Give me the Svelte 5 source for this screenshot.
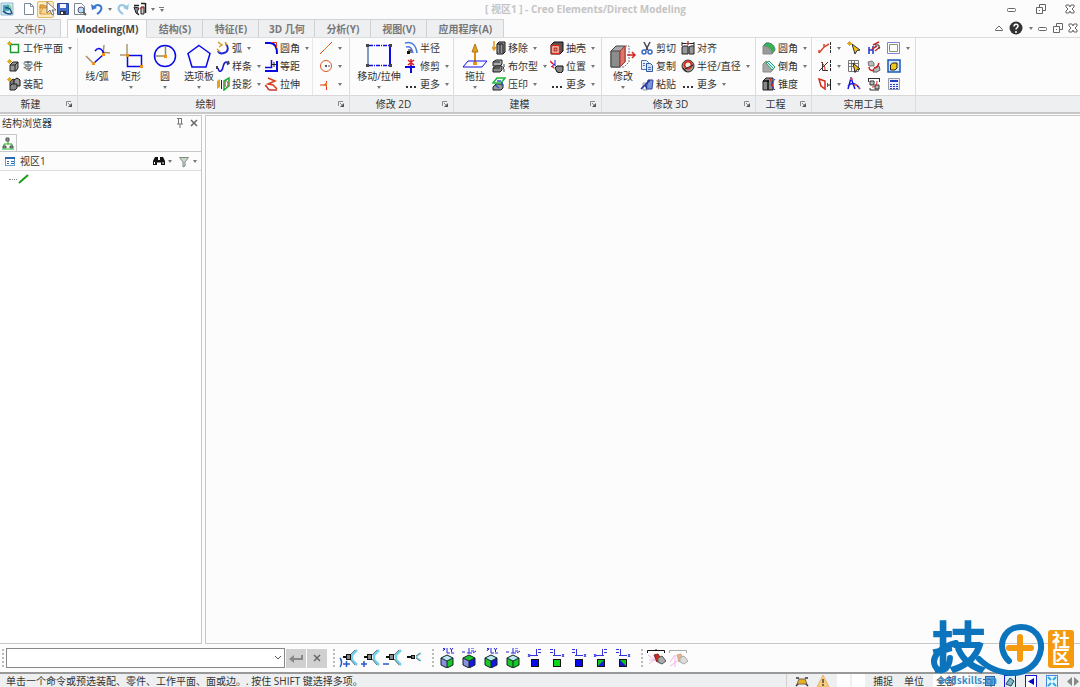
<script lang="ts">
	type Item = { icon: string; label?: string; menu?: boolean; title?: string };
	type Group = { id: string; name: string; launcher?: boolean; big: Item[]; cols: Item[][] };

	const tabs = [
		{ text: '结构', key: 'S' },
		{ text: '特征', key: 'E' },
		{ text: '3D 几何', key: '' },
		{ text: '分析', key: 'Y' },
		{ text: '视图', key: 'V' },
		{ text: '应用程序', key: 'A' }
	];

	const groups: Group[] = [
		{
			id: 'create',
			name: '新建',
			launcher: true,
			big: [],
			cols: [
				[
					{ icon: 'workplane', label: '工作平面', menu: true },
					{ icon: 'part', label: '零件' },
					{ icon: 'assembly', label: '装配' }
				]
			]
		},
		{
			id: 'draw',
			name: '绘制',
			launcher: true,
			big: [
				{ icon: 'lineArc', label: '线/弧' },
				{ icon: 'rect', label: '矩形', menu: true },
				{ icon: 'circle', label: '圆', menu: true },
				{ icon: 'polygon', label: '选项板', menu: true }
			],
			cols: [
				[
					{ icon: 'arc', label: '弧', menu: true },
					{ icon: 'spline', label: '样条', menu: true },
					{ icon: 'project', label: '投影', menu: true }
				],
				[
					{ icon: 'fillet', label: '圆角', menu: true },
					{ icon: 'offset', label: '等距' },
					{ icon: 'stretch', label: '拉伸' }
				],
				[
					{ icon: 'geoLine', title: '构造线', menu: true },
					{ icon: 'geoCircle', title: '构造圆', menu: true },
					{ icon: 'geoPoint', title: '点', menu: true }
				]
			]
		},
		{
			id: 'edit2d',
			name: '修改 2D',
			launcher: true,
			big: [{ icon: 'move', label: '移动/拉伸', menu: true }],
			cols: [
				[
					{ icon: 'radius', label: '半径' },
					{ icon: 'trim', label: '修剪', menu: true },
					{ icon: 'more', label: '更多', menu: true }
				]
			]
		},
		{
			id: 'model',
			name: '建模',
			launcher: true,
			big: [{ icon: 'pull', label: '拖拉', menu: true }],
			cols: [
				[
					{ icon: 'remove', label: '移除', menu: true },
					{ icon: 'bool', label: '布尔型', menu: true },
					{ icon: 'imprint', label: '压印', menu: true }
				],
				[
					{ icon: 'shell', label: '抽壳', menu: true },
					{ icon: 'position', label: '位置', menu: true },
					{ icon: 'more', label: '更多', menu: true }
				]
			]
		},
		{
			id: 'edit3d',
			name: '修改 3D',
			launcher: true,
			big: [{ icon: 'modify', label: '修改', menu: true }],
			cols: [
				[
					{ icon: 'cut', label: '剪切' },
					{ icon: 'copy', label: '复制' },
					{ icon: 'paste', label: '粘贴' }
				],
				[
					{ icon: 'align', label: '对齐' },
					{ icon: 'radius3d', label: '半径/直径', menu: true },
					{ icon: 'more', label: '更多', menu: true }
				]
			]
		},
		{
			id: 'eng',
			name: '工程',
			launcher: true,
			big: [],
			cols: [
				[
					{ icon: 'blend', label: '圆角', menu: true },
					{ icon: 'chamfer', label: '倒角', menu: true },
					{ icon: 'taper', label: '锥度' }
				]
			]
		},
		{
			id: 'util',
			name: '实用工具',
			big: [],
			cols: [
				[
					{ icon: 'dist1', title: '测量距离', menu: true },
					{ icon: 'dist2', title: '测量角度', menu: true },
					{ icon: 'dist3', title: '测量面', menu: true }
				],
				[
					{ icon: 'pick', title: '选择' },
					{ icon: 'pickList', title: '列表选择' },
					{ icon: 'curve', title: '曲线' }
				],
				[
					{ icon: 'swap', title: '替换' },
					{ icon: 'swapPart', title: '替换零件' },
					{ icon: 'cycle', title: '循环' }
				],
				[
					{ icon: 'frame', title: '框', menu: true },
					{ icon: 'box', title: '盒' },
					{ icon: 'calc', title: '计算器' }
				]
			]
		}
	];

	const views = ['camFit', 'camIn', 'camOut', 'cam'];
	const cubes = ['cube1', 'cube2', 'cube3', 'cube4', 'sq1', 'sq2', 'sq3', 'sq4', 'sq5'];

	// 20px view icons share the same cube, axis and camera parts
	const cube = (l: string, r: string, t: string) =>
		`<path d="M4 10l6 3v7l-6-3z" fill="${l}"/><path d="M16 10l-6 3v7l6-3z" fill="${r}"/><path d="M4 10l6-3 6 3-6 3z" fill="${t}"/><path d="M4 10l6-3 6 3v7l-6 3-6-3zM4 10l6 3 6-3M10 13v7" fill="none" stroke="#122"/>`;
	const axes = '<path d="M6 0l2 2M8 0L6 3M10 0v5h3M13 0l1.5 2L16 0M14.5 2v2M14 5h3" stroke="#22d" fill="none"/>';
	const axes2 = '<path d="M3 4h3M8 5h5M10 0v5M12 0h3M12 3h3M14 5l3-2" stroke="#22d" fill="none"/>';
	const square = (fill: string, d: string) =>
		`<path d="${d}" stroke="#33d" fill="none"/><rect x="6.5" y="11.5" width="7" height="7" fill="${fill}" stroke="#111"/>`;
	const axL = 'M5 7.5h8M11.5 8V1M13 1.5h3M13 4.5h3M3 6l2 3M5 6L3 9';
	const axR = 'M6 7.5h8M7.5 8V1M3 1.5h3M3 4.5h3M15 6l2 3M17 6l-2 3';
	const camera = (x: number) =>
		`<path d="M19 2l-5 5v5l5 5" fill="none" stroke="#6fd0ee" stroke-width="2.5"/><path d="M17 2l-5 5M12 11l5 6" stroke="#777"/><path d="M${x} 9h3" stroke="#111" stroke-width="2"/><rect x="${x + 3}.5" y="6.5" width="4" height="5" fill="#888" stroke="#111"/>`;
	const grey = (x: number, y: number) =>
		`<path d="M${x} ${y + 3}l3-3h5v6l-2 3H${x}z" fill="#999" stroke="#222"/><path d="M${x} ${y + 3}h5v6M${x + 5} ${y + 3}l3-3" fill="none" stroke="#222"/>`;
	const spark = '<path d="M0 2.5h5M2.5 0v5M1 1l3 3M4 1L1 4" stroke="#e0a820"/>';

	const icons: Record<string, string> = {
		workplane: '<rect x="3.5" y="3.5" width="8" height="8" fill="#fff" stroke="#1a9a2a" stroke-width="1.5"/>' + spark,
		part: grey(3, 3) + spark,
		assembly: '<path d="M3 4l3-2 3 2v5H3z" fill="#777" stroke="#222"/><path d="M7 3l3-2 3 2v6H7z" fill="#999" stroke="#111"/><path d="M3 9l2-2h5v4l-2 2H3z" fill="#888" stroke="#222"/>' + spark,
		arc: '<path d="M10 3c3 4 2 8-2 9-3 1-5 0-6-2" fill="none" stroke="#2424d8" stroke-width="2"/><path d="M2 1l4 3-3 2M1 8l3 3M9 1l2 3" stroke="#d69a28" stroke-width="1.5" fill="none"/>',
		spline: '<path d="M2 9c1 5 4 4 5-1s4-7 5-2" fill="none" stroke="#1c1cd8" stroke-width="1.5"/><path d="M1 7v3M12 2l1 3" stroke="#444" stroke-width="2"/>',
		project: '<path d="M1 4l3-2v8l-3 2z" fill="#e8a020"/><path d="M5 3h1v9H5z" fill="#222"/><path d="M8 4l5-3v8l-5 4z" fill="#fff" stroke="#12b030" stroke-width="1.5"/><ellipse cx="10.5" cy="7" rx="1.5" ry="3" fill="#fff" stroke="#d33"/>',
		fillet: '<path d="M1 2h5c5 0 7 4 7 11" fill="none" stroke="#0a0ae0" stroke-width="2"/><path d="M7 1.5h5.5V7" fill="none" stroke="#e03020"/>',
		offset: '<path d="M1 12h12V2" fill="none" stroke="#0a0ae0" stroke-width="2"/><path d="M1 8.5h6.5V1" fill="none" stroke="#0a0ae0" stroke-width="1.5"/><path d="M8 5.5h4M10 3v5" stroke="#222"/>',
		stretch: '<path d="M4 1l7 3-7 3 5 1 4 4" fill="none" stroke="#e03818" stroke-width="1.5"/><path d="M1 9c3-1 1 3 5 4h7" fill="none" stroke="#c33" stroke-width="1.5"/>',
		geoLine: '<path d="M1 13L13 1" stroke="#e04010"/><path d="M5 9l5-5" stroke="#d08020"/>',
		geoCircle: '<circle cx="7" cy="7" r="5.5" fill="none" stroke="#d85820"/><circle cx="7" cy="7" r="1" fill="#222"/><path d="M9 7h2" stroke="#555"/>',
		geoPoint: '<path d="M1 8h7M7.5 4v9" stroke="#e03818"/><path d="M4 8l4-3v5z" fill="#e87828"/>',
		radius: '<path d="M1 2c7-2 11 2 12 10M2 6c4-1 6 1 7 6" fill="none" stroke="#4a7ae0" stroke-width="1.5"/><path d="M4 9h3v3" fill="none" stroke="#112"/><path d="M3 10h3v3H3z" fill="#111"/>',
		trim: '<path d="M7 6v8M1 8h10" stroke="#0a0ae0" stroke-width="2"/><path d="M4 1l6 5M10 1L4 6M7 0v7" stroke="#e02020" stroke-width="1.5"/>',
		more: '<path d="M2 9h2v2H2zM6 9h2v2H6zM10 9h2v2h-2z" fill="#333"/>',
		remove: '<path d="M2 0v8M0 6l2 3 2-3" stroke="#e09a20" stroke-width="1.5" fill="none"/><path d="M5 3l2-2h6v10l-2 2H5z" fill="#999" stroke="#111"/><path d="M8 3v9M11 3v9M5 3h6" stroke="#111"/>',
		bool: '<path d="M1 3l3-2h6v4L8 7H1z" fill="#aaa" stroke="#222"/><path d="M1 9l3-2h6v4l-2 2H1z" fill="#888" stroke="#222"/><path d="M1 3h7M1 9h7" stroke="#222"/><path d="M12 5v3l-1 1 1 1v3" stroke="#444" fill="none"/>',
		imprint: '<path d="M1 10l3-3h7v4l-2 2H1z" fill="#999" stroke="#222"/><path d="M1 6l4-5h8l-4 5z" fill="none" stroke="#18b838" stroke-width="1.5"/><path d="M5 4h4M3 8l4 3M10 5v4" stroke="#2858c8" stroke-width="1.5"/>',
		shell: '<path d="M1 4l3-3h9v9l-3 3H1z" fill="#555" stroke="#111"/><rect x="1.5" y="4.5" width="8" height="8" fill="#f8d0c0" stroke="#d82818" stroke-width="1.5"/><rect x="4" y="7" width="3" height="3" fill="#e89070" stroke="#b02010"/>',
		position: '<path d="M5 1v5M1 8l4-3M1 3l7 6" stroke="#2020d8"/><path d="M0 2l3 3M2 7l2 2" stroke="#e02020" stroke-width="1.5"/><path d="M5 9l2-2h6v5l-2 2-4-1z" fill="#888" stroke="#111"/>',
		cut: '<path d="M4 1l4 8M10 1L6 9" stroke="#445" stroke-width="1.5"/><circle cx="4" cy="11" r="2" fill="none" stroke="#3a6ac0" stroke-width="1.5"/><circle cx="10" cy="11" r="2" fill="none" stroke="#3a6ac0" stroke-width="1.5"/>',
		copy: '<path d="M1.5 1.5h5l2 2v7h-7z" fill="#e8f0fb" stroke="#4a70b0"/><path d="M6.5 4.5h4l2 2v6h-6z" fill="#cfe0f7" stroke="#31589c"/><path d="M8 8.5h3M8 10.5h3M3 4.5h2M3 6.5h2" stroke="#4a70b0"/>',
		paste: '<path d="M3 6h4v7H3z" fill="#fff" stroke="#99a"/><path d="M8 3h5l-1 9H6z" fill="#7a96d8" stroke="#3048a0"/><path d="M1 12l4-4 2 3M4 9l6-6" stroke="#2030a0" stroke-width="1.5" fill="none"/>',
		align: '<path d="M1 6l2-1h4v8H1zM8 6l2-1h3v8H8z" fill="#999" stroke="#222"/><path d="M1 1v4M7 0v4M13 1v4M1 2.5h12" stroke="#222"/><path d="M5 2.5h4" stroke="#c22"/>',
		radius3d: '<circle cx="7" cy="7" r="6" fill="#999" stroke="#333"/><circle cx="7" cy="6" r="3.5" fill="#eee" stroke="#d83018" stroke-width="2"/><path d="M2 9l4 4M4 10l8-4" stroke="#222"/>',
		blend: '<path d="M1 5l3-3c5-1 9 3 9 7l-3 4c0-5-4-8-9-8z" fill="#2eb848" stroke="#578"/><path d="M1 5c5 0 9 3 9 8H1z" fill="#999" stroke="#888"/>',
		chamfer: '<path d="M1 5l3-3 8 7-3 4H1z" fill="#a8a8a8" stroke="#888"/><path d="M4 4l3-2 6 6-3 3z" fill="#cfe" stroke="#2a9a58"/><path d="M5 3l7 7" stroke="#38c"/>',
		taper: '<path d="M1 4l3-3h7v12H1z" fill="#888" stroke="#222"/><path d="M6 3v10M1 4h6" stroke="#111" stroke-width="1.5"/><path d="M8 1l4 12" stroke="#d22"/><path d="M13 2l-4 6 4 5" stroke="#22d" stroke-dasharray="2 1" fill="none"/>',
		dist1: '<path d="M1 12l5-6 5-3M1 9v3M6 6V3" fill="none" stroke="#d84830" stroke-width="1.5"/><path d="M12.5 1v12" stroke="#333" stroke-dasharray="3 1"/>',
		dist2: '<path d="M1 12L10 3M4.5 3v8.5H10" fill="none" stroke="#333"/><path d="M3 3c3 2 4 5 4 8" fill="none" stroke="#d82818"/><path d="M12.5 1v12" stroke="#222" stroke-dasharray="3 1"/>',
		dist3: '<path d="M1 2l6 2v8L3 9z" fill="#fff" stroke="#d82818" stroke-width="1.5"/><path d="M9 8h3M12.5 2v11" stroke="#222"/><path d="M9.5 6v4" stroke="#d22"/>',
		pick: '<path d="M5 3l8 6-3 .5L8 13z" fill="#f0c010" stroke="#333"/>' + spark,
		pickList: '<path d="M1.5 1.5h10v11h-10zM1 4.5h10M1 7.5h5M4.5 1v11M7.5 1v3" fill="none" stroke="#777"/><path d="M6 4l7 6-3 .5-2 3z" fill="#f0c010" stroke="#222"/>',
		curve: '<path d="M1 12L4 1l4 11M1 9c4-4 8-3 12 3" fill="none" stroke="#1818d8" stroke-width="1.5"/><path d="M3 2h3M7 8h3M11 11h2" stroke="#d66" stroke-width="1.5"/>',
		swap: '<path d="M2 6v7M6 5v8M2 9h4" stroke="#2030d0" stroke-width="1.5"/><path d="M6 4l6-3M8 10l5-4M5 8l5-3" stroke="#c03030" stroke-width="1.5"/><path d="M8 4h4v4" fill="none" stroke="#333"/>',
		swapPart: '<path d="M1 3l4-1 2 2v3H2z" fill="#bbb" stroke="#777"/><path d="M7 9l5-2 1 4-3 2H6z" fill="#bbb" stroke="#555"/><path d="M2 8c0 3 2 4 5 3M7 9c3 0 4-2 5-5" fill="none" stroke="#c22" stroke-width="1.5"/>',
		cycle: '<path d="M1 1.5h11M1.5 1v4M12.5 1v4M3 11v2h9" fill="none" stroke="#333"/><path d="M3 4h4v4H3zM8 8h4v4H8z" fill="#bbb" stroke="#333"/><path d="M5 10c4 0 5-3 5-6" fill="none" stroke="#c22"/>',
		frame: '<path d="M.5 1.5h12v11H.5z" fill="#fff" stroke="#8080d8"/><path d="M2.5 3.5h8v7h-8z" fill="#fff" stroke="#7a9a7a"/>',
		box: '<path d="M1 1h12v12H1z" fill="#d8e8fa" stroke="#1858b8" stroke-width="1.5"/><path d="M3.5 6l2-2H10v5l-2 2H3.5z" fill="#f0c818" stroke="#222"/>',
		calc: '<path d="M1.5 1.5h11v11h-11z" fill="#eef" stroke="#99a"/><path d="M3 4h8" stroke="#2040c0" stroke-width="2"/><path d="M3 7.5h2M6 7.5h2M9 7.5h2M3 9.5h2M6 9.5h2M9 9.5h2M3 11.5h2M6 11.5h2M9 11.5h2" stroke="#2040c0"/>',

		lineArc: '<path d="M2 13l7 7M20 2l-1 10M18 9l8 1" stroke="#a89068" stroke-width="1.5"/><path d="M10 20l9-8M11 8c3-4 7-3 9 3" fill="none" stroke="#0a0ae8" stroke-width="1.5"/><path d="M8 19h3v3H8zM18 10h3v3h-3z" fill="#f09018"/>',
		rect: '<path d="M9 1v11M2 12h7" stroke="#a89878" stroke-width="1.5"/><rect x="9.5" y="12.5" width="14" height="11" fill="none" stroke="#0a0ae8" stroke-width="1.5"/><path d="M8 11h3v3H8zM22 22h3v3h-3z" fill="#f09018"/>',
		circle: '<circle cx="13" cy="13" r="10.5" fill="none" stroke="#0a0ae8" stroke-width="1.5"/><path d="M13.5 3v10H3" stroke="#988860" stroke-width="1.5" fill="none"/><path d="M12 12h3v3h-3z" fill="#f09018"/>',
		polygon: '<path d="M13 2.5l11 8L20 24H6L2 10.5z" fill="none" stroke="#0a0ae8" stroke-width="1.5"/>',
		move: '<path d="M2 3v19" stroke="#5878b0" stroke-width="1.5"/><path d="M3 2.5h20M3 22.5h20" stroke="#1010d8" stroke-width="1.5" stroke-dasharray="4 1 1 1"/><path d="M24 3v19" stroke="#0a0ae8" stroke-width="2"/><path d="M0 1h3v3H0zM23 1h3v3h-3zM0 21h3v3H0zM23 21h3v3h-3z" fill="#444"/>',
		pull: '<path d="M13 5v14" stroke="#e09010" stroke-width="2"/><path d="M13 1l-3 8h6z" fill="#e8a018" stroke="#a87818"/><path d="M6 18h19l-5 6H1z" fill="none" stroke="#1010e0"/><path d="M11 19h4v3h-4z" fill="#f09018"/>',
		modify: '<path d="M1 8l5-5h9v16l-5 5H1z" fill="#aaa" stroke="#444"/><path d="M1 8h9v16H1z" fill="#8c8c8c" stroke="#444"/><path d="M10 8l5-5v16l-5 5z" fill="#d87868" stroke="#a33"/><path d="M15 3h4v16l-5 5h-4" fill="none" stroke="#777" stroke-dasharray="2 1"/><path d="M17 12h8M22 9l3 3-3 3" fill="none" stroke="#d82020" stroke-width="1.5"/>',

		app: '<path d="M1 1h12v12H1z" fill="#cfe6f0" stroke="#8abcd0"/><path d="M3 3h6v6H3z" fill="#4aa8b8"/><path d="M5 6c4-1 6 1 7 6M3 9c2 2 4 3 8 3" fill="none" stroke="#1a4a88" stroke-width="1.5"/><path d="M7 3c2 0 4 1 4 4" fill="none" stroke="#58b858"/>',
		new: '<path d="M2.5 1.5h6l3 3v8h-9z" fill="#fff" stroke="#7a8898"/><path d="M8.5 1v3.500h3" fill="none" stroke="#7a8898"/>',
		open: '<path d="M1 3h4l1 1h5v2H1zM1 12V5" fill="#e8a848" stroke="#c88830"/><path d="M1 12l3-6h9l-2 6z" fill="#fbd890" stroke="#d89840"/>',
		save: '<path d="M1.5 1.5h11v11h-11z" fill="#4068c8" stroke="#2848a0"/><path d="M4 2h6v4H4z" fill="#f4f7ff"/><path d="M4 9h6v4H4z" fill="#333"/><path d="M5 10h2v2H5z" fill="#fff"/>',
		preview: '<path d="M1.5 1.5h7l3 3v8h-10z" fill="#fff" stroke="#7a8898"/><circle cx="8" cy="8" r="3" fill="#bcdcf4" stroke="#557"/><path d="M10 10l3 3" stroke="#665" stroke-width="2"/>',
		undo: '<path d="M4 5c4-4 9-1 7 3-1 2-2 3-4 4" fill="none" stroke="#3878d0" stroke-width="2"/><path d="M1 2l1 6 5-2z" fill="#3878d0"/>',
		redo: '<path d="M10 5c-4-4-9-1-7 3 1 2 2 3 4 4" fill="none" stroke="#98c4e4" stroke-width="2"/><path d="M13 2l-1 6-5-2z" fill="#98c4e4"/>',
		render: '<path d="M1 3.5h5M8 1.5h4M12.5 1v10" stroke="#222" stroke-width="1.5"/><path d="M1 5l5 1-2 4 2 3-3-2-1-3z" fill="#889" stroke="#222"/><path d="M8 5h3v7H8z" fill="#ccc" stroke="#222"/><path d="M7 7l4-2" stroke="#d22"/>',

		min: '<rect x="2.5" y="6.5" width="8" height="3" rx="1" fill="#fff" stroke="#666"/>',
		restore: '<path d="M5.5 5V2.500h6v6H9" fill="none" stroke="#666"/><path d="M2.5 5.5h6v6h-6z" fill="#fff" stroke="#666"/><path d="M5 8h1v1H5z" fill="#666"/>',
		close: '<path d="M3 3h3l1 2 1-2h3v2L9 7l2 2v2H8L7 9l-1 2H3V9l2-2-2-2z" fill="#fff" stroke="#666"/>',
		collapse: '<path d="M3.500 8.500L7 5l3.500 3.500v1h-7z" fill="#fff" stroke="#666"/>',
		help: '<circle cx="7" cy="7" r="6.5" fill="#333"/><path d="M5 5.5c0-3 4-3 4-.5 0 2-2 1.500-2 3.500M7 10v2" fill="none" stroke="#fff" stroke-width="1.5"/>',

		pin: '<path d="M4 2.500h5M5.500 3v5M8.500 3v5M4 8h6M7 8v4" fill="none" stroke="#777"/>',
		x: '<path d="M4 4l6 6M10 4l-6 6" stroke="#666" stroke-width="1.5"/>',
		tree: '<path d="M7 5v3M3 11V8h8v3" fill="none" stroke="#2a2"/><path d="M5 2h3v3H5zM2 10h3v2H2zM9 10h3v2H9z" fill="#999" stroke="#555"/><path d="M1 13h12" stroke="#2b3"/>',
		view: '<rect x="2.5" y="3.5" width="9" height="8" fill="#fff" stroke="#6a9cc8"/><path d="M2 4h10" stroke="#2868b0" stroke-width="2"/><path d="M4 7.5h2M8 7.5h3M4 9.5h2M8 9.5h3" stroke="#2868b0"/>',
		find: '<path d="M3 3h3v3h2V3h3l2 4v4H9V8.500H5V11H1V7z" fill="#111"/><path d="M2.500 8v2M11 8v2" stroke="#fff"/>',
		filter: '<path d="M2.500 3.500h9L8 8v4l-2 1V8z" fill="#c4d8c4" stroke="#888"/>',
		node: '<path d="M2 11l9-8" stroke="#18a018" stroke-width="2"/>',

		enter: '<path d="M4 8h9V4" fill="none" stroke="#888" stroke-width="2"/><path d="M0 8l5-4v8z" fill="#888"/>',
		camFit: camera(5) + '<path d="M2 10c2 2 2 7 0 9M5 16h7M8.500 13v6" fill="none" stroke="#2858c8" stroke-width="1.5"/>',
		camIn: camera(4) + '<path d="M1 16h6M4 13v6" stroke="#2858c8" stroke-width="1.5"/>',
		camOut: camera(4) + '<path d="M1 16h6" stroke="#2858c8" stroke-width="1.5"/>',
		cam: '<path d="M17 5l-4 3v2l4 3" fill="none" stroke="#8ad4ec" stroke-width="2"/><path d="M16 5l-4 3M12 10l4 3" stroke="#777"/><path d="M3 9h4" stroke="#111" stroke-width="2"/><rect x="7.5" y="7.5" width="3" height="3" fill="#777" stroke="#111"/>',
		cube1: axes + cube('#8890e0', '#18c828', '#b8e8f0'),
		cube2: axes2 + cube('#8890e0', '#1818e0', '#18c828'),
		cube3: axes + cube('#18c828', '#1818e0', '#b8e8f0'),
		cube4: axes2 + cube('#18c828', '#18c828', '#b8e8f0'),
		sq1: square('#0808f0', axL),
		sq2: square('#08d818', axR),
		sq3: square('#0808f0', axR),
		sq4: square('#08c818', axL) + '<path d="M13 12v6H7z" fill="#1818e0"/>',
		sq5: square('#1818c0', axR) + '<path d="M7 12h6v6z" fill="#08c818"/>',
		erase: '<path d="M1.500 5V2.500h17V5M10 1v2" fill="none" stroke="#111"/><path d="M2 7l12 9M3 16l9-8M3 12h9" stroke="#f0b8e8"/><path d="M8 7l4-1 3 5-4 3z" fill="#d82818" stroke="#822"/><path d="M12 10l4-2 4 5-4 3-4-2z" fill="#aaa" stroke="#555"/>',
		eraseAll: '<path d="M1.500 5V2.500h17V5" fill="none" stroke="#aaa"/><path d="M2 14l5-7v12M2 18l9-6" stroke="#f0b8e8" fill="none"/><path d="M9 7l4-1 2 5-4 3z" fill="#e8b090" stroke="#ca8"/><path d="M12 10l4-2 4 5-4 3-4-2z" fill="#ddd" stroke="#aaa"/>',

		snap: '<path d="M1 4h3M10 4h3M1 12l3-3M13 12l-3-3" stroke="#333" stroke-width="1.5" fill="none"/><path d="M4 5h6l2 5H2z" fill="#e8b020" stroke="#765"/>',
		warn: '<path d="M7 1l6 12H1z" fill="#f8cc80" stroke="#e8b868"/><path d="M7 5v4M7 10v2" stroke="#543" stroke-width="1.5"/>',
		cap: '<rect x="3.5" y="2.5" width="9" height="9" fill="#68a8d8" stroke="#2868a8"/><path d="M1 5.500h8V13" fill="none" stroke="#2868a8"/>',
		render3: '<rect x="1.5" y="1.5" width="11" height="12" fill="#d8f0f8" stroke="#1818d8"/><path d="M3 10l4-6 4 3-3 5z" fill="#78b8c8" stroke="#345"/>',
		back: '<rect x="1.5" y="1.5" width="11" height="12" fill="#fff" stroke="#1818d8"/><path d="M10 4v7L4 7.500z" fill="#0808c0"/>',
		fit: '<rect x="1.5" y="1.5" width="11" height="12" fill="#e0f8ff" stroke="#4888e0"/><path d="M3 3l3 3M11 3L8 6M3 12l3-3M11 12L8 9" stroke="#38a8e0" stroke-width="2"/>',
		nav: '<path d="M6 3v9L1 7.500zM8 3v9l5-4.500z" fill="#888"/>'
	};

	let command = $state('');
</script>

{#snippet icon(name: string, size: number)}
	<svg class="icon s{size}" viewBox="0 0 {size} {size}" aria-hidden="true">{@html icons[name]}</svg>
{/snippet}

{#snippet quick(name: string, title: string)}
	<button class="quick" class:hot={name === 'open'} aria-label={title}>
		{@render icon(name, 14)}
		{#if name === 'open'}
			<svg class="pointer" viewBox="0 0 10 16" aria-hidden="true">
				<path d="M1 1v11l3-3 2 5 2-1-2-4h4z" fill="#fff" stroke="#777" />
			</svg>
		{/if}
	</button>
{/snippet}

<div class="app">
	<header class="titlebar">
		<div class="quick-access">
			<span class="app-icon">{@render icon('app', 14)}</span>
			{@render quick('new', '新建')}
			{@render quick('open', '打开')}
			{@render quick('save', '保存')}
			{@render quick('preview', '预览')}
			{@render quick('undo', '撤消')}
			<button class="drop" aria-label="撤消列表"><i class="arrow"></i></button>
			{@render quick('redo', '重做')}
			{@render quick('render', '渲染')}
			<button class="drop" aria-label="渲染选项"><i class="arrow"></i></button>
			<button class="drop custom" aria-label="自定义"><i class="arrow"></i></button>
		</div>
		<h1>[ 视区1 ] - Creo Elements/Direct Modeling</h1>
		<div class="window-buttons">
			<button aria-label="最小化">{@render icon('min', 14)}</button>
			<button aria-label="还原">{@render icon('restore', 14)}</button>
			<button aria-label="关闭">{@render icon('close', 14)}</button>
		</div>
	</header>

	<nav class="tabs">
		<button class="tab file">文件(F)</button>
		<button class="tab active">Modeling(M)</button>
		{#each tabs as tab}
			<button class="tab">{tab.text}{tab.key ? `(${tab.key})` : ''}</button>
		{/each}
		<div class="doc-buttons">
			<button aria-label="折叠">{@render icon('collapse', 14)}</button>
			<button class="help" aria-label="帮助">{@render icon('help', 14)}</button>
			<button class="drop" aria-label="帮助菜单"><i class="arrow"></i></button>
			<button aria-label="最小化窗口">{@render icon('min', 14)}</button>
			<button aria-label="还原窗口">{@render icon('restore', 14)}</button>
			<button aria-label="关闭窗口">{@render icon('close', 14)}</button>
		</div>
	</nav>

	<section class="ribbon">
		{#each groups as group (group.id)}
			<div class="group {group.id}">
				<div class="tools">
					{#each group.big as item}
						<button class="big">
							{@render icon(item.icon, 26)}
							<span>{item.label}</span>
							{#if item.menu}<i class="arrow"></i>{/if}
						</button>
					{/each}
					{#each group.cols as col}
						<div class="col">
							{#each col as item}
								<button class="small" aria-label={item.title}>
									{@render icon(item.icon, 14)}
									{#if item.label}<span>{item.label}</span>{/if}
									{#if item.menu}<i class="arrow"></i>{/if}
								</button>
							{/each}
						</div>
					{/each}
				</div>
				<div class="caption">
					<span>{group.name}</span>
					{#if group.launcher}
						<button class="launcher" aria-label="{group.name}选项">
							<svg viewBox="0 0 8 8" aria-hidden="true">
								<path d="M1.5 6V1.500H6M3 3l3 3" fill="none" stroke="#888" />
								<path d="M7 3v4H3z" fill="#555" />
							</svg>
						</button>
					{/if}
				</div>
			</div>
		{/each}
		<div class="group rest">
			<div class="tools"></div>
			<div class="caption"></div>
		</div>
	</section>

	<main class="workspace">
		<aside class="browser">
			<div class="browser-head">
				<h2>结构浏览器</h2>
				<button aria-label="固定">{@render icon('pin', 14)}</button>
				<button aria-label="关闭浏览器">{@render icon('x', 14)}</button>
			</div>
			<div class="browser-tabs">
				<button aria-label="结构">{@render icon('tree', 14)}</button>
			</div>
			<div class="browser-view">
				{@render icon('view', 14)}
				<span>视区1</span>
				<button aria-label="查找">{@render icon('find', 14)}<i class="arrow"></i></button>
				<button aria-label="过滤">{@render icon('filter', 14)}<i class="arrow"></i></button>
			</div>
			<div class="browser-tree">
				<i class="branch"></i>
				{@render icon('node', 14)}
			</div>
		</aside>
		<div class="canvas"></div>
	</main>

	<div class="command-bar">
		<i class="grip"></i>
		<select bind:value={command} aria-label="命令">
			<option value=""></option>
		</select>
		<button class="flat" aria-label="确定">{@render icon('enter', 14)}</button>
		<button class="flat" aria-label="取消">{@render icon('x', 14)}</button>
		<i class="grip"></i>
		<div class="view-buttons">
			{#each views as name}
				<button aria-label={name}>{@render icon(name, 20)}</button>
			{/each}
		</div>
		<i class="grip"></i>
		<div class="view-buttons">
			{#each cubes as name}
				<button aria-label={name}>{@render icon(name, 20)}</button>
			{/each}
		</div>
		<i class="grip"></i>
		<div class="view-buttons">
			<button aria-label="擦除">{@render icon('erase', 20)}</button>
			<button aria-label="全部擦除">{@render icon('eraseAll', 20)}</button>
		</div>
	</div>

	<footer class="status">
		<p>单击一个命令或预选装配、零件、工作平面、面或边。. 按住 SHIFT 键选择多项。</p>
		<div class="status-tools">
			{@render icon('snap', 14)}
			{@render icon('warn', 14)}
			<span class="well"></span>
			<span class="well"></span>
			<button>捕捉</button>
			<button>单位</button>
			<button class="filter">全部</button>
			{@render icon('cap', 14)}
			{@render icon('render3', 14)}
			{@render icon('back', 14)}
			{@render icon('fit', 14)}
			{@render icon('nav', 14)}
		</div>
	</footer>

	<svg class="brand" viewBox="0 0 150 90" aria-label="addskills.cn">
		<text class="ji" x="1" y="69">技</text>
		<g fill="none" stroke="#0b74bd" stroke-width="6" stroke-linecap="round">
			<path d="M26 44C10 48 1 58 5 67c4 8 14 5 15-8" />
			<path d="M79 62C66 50 72 28 91 28c14 0 21 11 20 22-2 14-13 24-28 24-13 0-25-5-34-14" />
		</g>
		<path d="M90 38v22M79 49h22" fill="none" stroke="#f59a0c" stroke-width="6" stroke-linecap="round" />
		<rect x="118" y="31" width="26" height="38" rx="3" fill="#f59a0c" />
		<text class="she" x="122" y="48">社</text>
		<text class="she" x="122" y="65">区</text>
		<text class="url" x="8" y="85">addskills.cn</text>
	</svg>
</div>

<style>
	:global(body) {
		margin: 0;
	}

	.app {
		position: relative;
		display: flex;
		flex-direction: column;
		height: 100vh;
		overflow: hidden;
		background: #fcfcfc;
		color: #333;
		font: 10px/14px 'Open Sans', 'Noto Sans CJK SC', sans-serif;
	}

	button {
		display: flex;
		align-items: center;
		justify-content: center;
		margin: 0;
		padding: 0;
		border: 0;
		background: none;
		color: inherit;
		font: inherit;
		white-space: nowrap;
	}

	.icon {
		display: block;
		flex: none;
	}

	.s14 {
		width: 14px;
		height: 14px;
	}

	.s20 {
		width: 20px;
		height: 20px;
	}

	.s26 {
		width: 26px;
		height: 26px;
	}

	.arrow {
		flex: none;
		width: 0;
		border: 2px solid transparent;
		border-top: 3px solid #777;
		border-bottom: 0;
	}

	/* title bar */
	.titlebar {
		display: flex;
		align-items: center;
		height: 18px;
	}

	.quick-access {
		display: flex;
		align-items: center;
	}

	.app-icon {
		padding-right: 6px;
	}

	.quick {
		position: relative;
		width: 17px;
		height: 17px;
	}

	.quick.hot {
		box-sizing: border-box;
		border: 1px solid #e8b860;
		border-radius: 2px;
		background: #fdebc0;
	}

	.pointer {
		position: absolute;
		left: 8px;
		top: -1px;
		width: 10px;
		height: 16px;
	}

	.drop {
		width: 9px;
		height: 14px;
	}

	.drop.custom {
		flex-direction: column;
		gap: 1px;
	}

	.drop.custom::before {
		content: '';
		width: 5px;
		height: 1px;
		background: #777;
	}

	h1 {
		flex: 1;
		margin: 0;
		color: #c4c4c4;
		font-size: 10px;
		font-weight: 700;
		text-align: center;
	}

	.window-buttons {
		display: flex;
		gap: 15px;
		padding-right: 3px;
	}

	/* ribbon tabs */
	.tabs {
		display: flex;
		align-items: flex-end;
		height: 19px;
		border-bottom: 1px solid #ddd;
	}

	.tab {
		box-sizing: border-box;
		min-width: 56px;
		height: 18px;
		padding: 0 8px;
		border: 1px solid #d0d2d4;
		border-width: 1px 0 0 1px;
		background: #eeeff1;
		color: #777;
		font-weight: 700;
	}

	.tab.file {
		min-width: 61px;
		margin-right: 6px;
		border-width: 1px 1px 0 0;
		color: #555;
		font-weight: 400;
	}

	.tab.active {
		height: 19px;
		margin-bottom: -1px;
		background: #fcfcfc;
		color: #444;
	}

	.tab:nth-last-child(2) {
		min-width: 78px;
		border-right-width: 1px;
	}

	.doc-buttons {
		display: flex;
		align-items: center;
		gap: 1px;
		height: 18px;
		margin-left: auto;
	}

	.help {
		margin: 0 2px;
	}

	/* ribbon */
	.ribbon {
		display: grid;
		grid-template-columns: 78px 272px 104px 148px 154px 56px 104px 1fr;
		border-bottom: 2px solid #c8c8c8;
	}

	.group {
		display: flex;
		flex-direction: column;
		min-width: 0;
		border-right: 1px solid #dcdcdc;
	}

	.group.rest {
		border-right: 0;
	}

	.tools {
		display: flex;
		height: 57px;
		padding-left: 4px;
	}

	.create .tools {
		padding-left: 7px;
	}

	.draw .tools {
		padding-left: 2px;
	}

	.eng .tools,
	.util .tools {
		padding-left: 6px;
	}

	.big {
		flex: none;
		flex-direction: column;
		justify-content: flex-start;
		width: 34px;
		padding-top: 5px;
	}

	.edit2d .big {
		width: 50px;
	}

	.big span {
		margin-bottom: 3px;
	}

	.col {
		flex: none;
		padding-top: 1px;
	}

	.draw .col {
		min-width: 48px;
	}

	.draw .col:last-child {
		min-width: 0;
		padding-left: 6px;
		border-left: 1px solid #e8e8e8;
	}

	.model .col {
		min-width: 58px;
	}

	.model .col:last-child {
		min-width: 0;
	}

	.edit3d .col {
		min-width: 41px;
	}

	.util .tools {
		gap: 6px;
	}

	.small {
		gap: 2px;
		height: 18px;
	}

	.small .arrow {
		margin-left: 3px;
	}

	.caption {
		display: flex;
		align-items: center;
		height: 16px;
		border-top: 1px solid #d8d8d8;
		background: #eeeff1;
	}

	.caption span {
		flex: 1;
		text-align: center;
	}

	.launcher {
		width: 16px;
		height: 14px;
	}

	.launcher svg {
		width: 8px;
		height: 8px;
	}

	/* workspace */
	.workspace {
		display: flex;
		flex: 1;
		gap: 3px;
		min-height: 0;
		padding-top: 1px;
	}

	.browser {
		box-sizing: border-box;
		display: flex;
		flex-direction: column;
		width: 202px;
		border: 1px solid #c8c8c8;
		border-left: 0;
	}

	.browser-head {
		display: flex;
		align-items: center;
		height: 14px;
		padding-left: 2px;
	}

	h2 {
		flex: 1;
		margin: 0;
		font-size: 10px;
		font-weight: 400;
	}

	.browser-tabs {
		display: flex;
		padding-top: 4px;
		border-bottom: 1px solid #c8c8c8;
	}

	.browser-tabs button {
		width: 17px;
		height: 17px;
		border: 1px solid #c8c8c8;
		border-width: 1px 1px 0 0;
	}

	.browser-view {
		display: flex;
		align-items: center;
		gap: 3px;
		height: 18px;
		padding: 0 4px 0 3px;
		border-bottom: 1px solid #ddd;
	}

	.browser-view span {
		flex: 1;
	}

	.browser-view button {
		gap: 2px;
		margin-left: 2px;
	}

	.browser-tree {
		display: flex;
		flex: 1;
		align-items: flex-start;
		padding: 1px 0 0 9px;
		background: #fff;
	}

	.branch {
		width: 8px;
		margin-top: 7px;
		border-top: 1px dotted #888;
	}

	.canvas {
		flex: 1;
		border: 1px solid #c8c8c8;
		border-right: 0;
	}

	/* command bar */
	.command-bar {
		display: flex;
		align-items: center;
		height: 28px;
		border-bottom: 2px solid #999;
	}

	.grip {
		width: 2px;
		height: 19px;
		margin: 0 2px;
		background: repeating-linear-gradient(#bbb 0 2px, transparent 2px 4px);
	}

	select {
		width: 279px;
		height: 20px;
		padding: 0 16px 0 4px;
		border: 1px solid #888;
		border-radius: 0;
		appearance: none;
		background-color: #fff;
		background-image: url("data:image/svg+xml,%3Csvg xmlns='http://www.w3.org/2000/svg' viewBox='0 0 8 8'%3E%3Cpath d='M1 2l3 3 3-3' fill='none' stroke='%23555'/%3E%3C/svg%3E");
		background-position: right 2px center;
		background-repeat: no-repeat;
		background-size: 8px 8px;
		font: inherit;
	}

	.flat {
		width: 20px;
		height: 19px;
		margin-left: 1px;
		background: #d0d0d0;
	}

	.flat + .grip {
		margin-left: 6px;
	}

	.view-buttons {
		display: flex;
		padding-right: 5px;
	}

	.view-buttons button {
		width: 22px;
		height: 24px;
	}

	/* status bar */
	.status {
		display: flex;
		align-items: center;
		height: 13px;
		background: #eeeff1;
	}

	.status p {
		flex: 1;
		margin: 0;
		padding-left: 6px;
	}

	.status-tools {
		display: flex;
		align-items: center;
		gap: 7px;
		padding-left: 8px;
		border-left: 1px solid #d0d0d0;
	}

	.well {
		width: 13px;
		height: 13px;
		margin-right: -5px;
		background: #fff;
	}

	.well + button {
		margin-left: 4px;
	}

	.status-tools button {
		width: 24px;
	}

	.status-tools .filter {
		justify-content: flex-start;
		width: 42px;
		padding-left: 3px;
		background: #fff;
	}

	/* community logo over the drawing area */
	.brand {
		position: absolute;
		right: 0;
		bottom: -2px;
		width: 150px;
		height: 90px;
		pointer-events: none;
	}

	.brand text {
		font-family: 'Noto Sans CJK SC', sans-serif;
		font-weight: 700;
	}

	.ji {
		fill: #0b74bd;
		font-size: 56px;
	}

	.she {
		fill: #fff;
		font-size: 18px;
	}

	.url {
		fill: #3b8ccb;
		font-size: 10px;
	}
</style>
